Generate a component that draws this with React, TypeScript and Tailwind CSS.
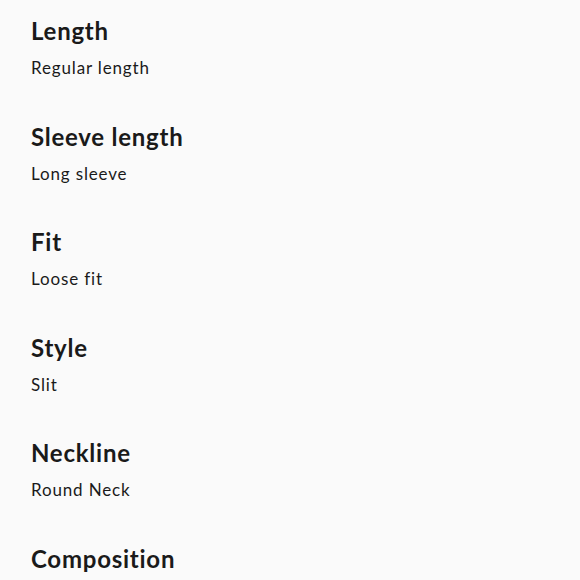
const ATTRS = [
  { label: 'Length', value: 'Regular length' },
  { label: 'Sleeve length', value: 'Long sleeve' },
  { label: 'Fit', value: 'Loose fit' },
  { label: 'Style', value: 'Slit' },
  { label: 'Neckline', value: 'Round Neck' },
  { label: 'Composition', value: '' },
];

export default function App() {
  return (
    <div className="w-[580px] h-[580px] overflow-hidden bg-[#fafafa] text-[#1a1a1a] font-['Lato','Inter',sans-serif]">
      <div className="flex flex-col gap-[40.5px] pl-[31px] pt-[15px]">
        {ATTRS.map((a) => (
          <div key={a.label} className="flex flex-col gap-[9px]">
            <h3 className="text-[24px] leading-[32px] font-bold tracking-[0.75px]">{a.label}</h3>
            <p className="text-[17px] leading-[24px] h-[24px] tracking-[0.85px]">{a.value}</p>
          </div>
        ))}
      </div>
    </div>
  );
}
